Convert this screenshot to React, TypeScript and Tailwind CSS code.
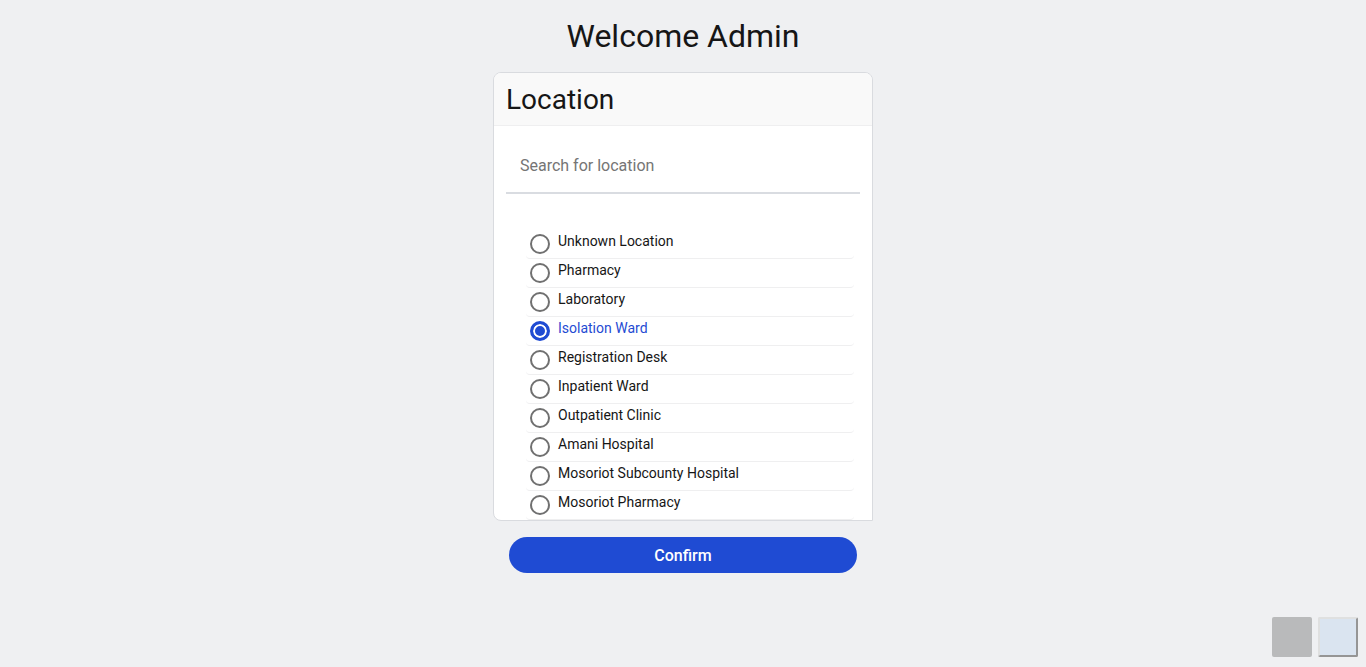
import { useState } from "react";

const locations = [
  "Unknown Location",
  "Pharmacy",
  "Laboratory",
  "Isolation Ward",
  "Registration Desk",
  "Inpatient Ward",
  "Outpatient Clinic",
  "Amani Hospital",
  "Mosoriot Subcounty Hospital",
  "Mosoriot Pharmacy",
];

type LocationOptionProps = {
  name: string;
  checked: boolean;
  onSelect: (name: string) => void;
};

function LocationOption({ name, checked, onSelect }: LocationOptionProps) {
  return (
    <li className="rounded border-b border-[#efeff0]">
      <label
        className={`flex h-7 cursor-pointer items-start gap-2 pl-1 text-sm ${
          checked ? "text-[#1f4bd3]" : "text-[#161616]"
        }`}
      >
        <input
          type="radio"
          name="location"
          value={name}
          checked={checked}
          onChange={() => onSelect(name)}
          className="mt-1 size-5 shrink-0 appearance-none rounded-full border-2 border-[#707070] bg-white checked:border-[3px] checked:border-[#1f4bd3] checked:bg-[#1f4bd3] checked:shadow-[inset_0_0_0_2px_white]"
        />
        <span className="pt-px">{name}</span>
      </label>
    </li>
  );
}

export default function App() {
  const [selected, setSelected] = useState("Isolation Ward");
  const [query, setQuery] = useState("");
  const visible = locations.filter((name) =>
    name.toLowerCase().includes(query.toLowerCase()),
  );

  return (
    <main className="min-h-screen bg-[#eff0f2] px-4 pt-4 pb-8 font-[Roboto,sans-serif] text-[#161616]">
      <h1 className="text-center text-[32px] leading-10">Welcome Admin</h1>

      <form
        className="mx-auto mt-4 max-w-[380px]"
        onSubmit={(event) => event.preventDefault()}
      >
        <section className="overflow-hidden rounded-lg rounded-br-none border border-[#d9dbdf] bg-white">
          <h2 className="border-b border-[#efeff0] bg-[#f9f9f9] px-3 pt-2 pb-1.5 text-[28px] leading-[38px]">
            Location
          </h2>
          <div className="px-3 pt-3">
            <input
              type="search"
              aria-label="Search for location"
              placeholder="Search for location"
              value={query}
              onChange={(event) => setQuery(event.target.value)}
              className="h-14 w-full border-b-2 border-[#d9dce1] bg-white px-3.5 text-base outline-none placeholder:text-[#757575]"
            />
          </div>
          <ul className="mt-9 mr-[18px] ml-8">
            {visible.map((name) => (
              <LocationOption
                key={name}
                name={name}
                checked={name === selected}
                onSelect={setSelected}
              />
            ))}
          </ul>
        </section>

        <div className="px-4 pt-4">
          <button
            type="submit"
            className="h-9 w-full cursor-pointer rounded-full bg-[#1f4bd3] pt-0.5 text-base font-medium text-white"
          >
            Confirm
          </button>
        </div>
      </form>

      <div className="fixed right-2 bottom-2.5 flex gap-1.5">
        <button
          type="button"
          aria-label="Previous"
          className="size-10 rounded-xs bg-[#b9babb]"
        />
        <button
          type="button"
          aria-label="Next"
          className="size-10 rounded-xs border-2 border-t-[#dfe0e0] border-r-[#959595] border-b-[#959595] border-l-[#dfe0e0] bg-[#dae4f0]"
        />
      </div>
    </main>
  );
}
